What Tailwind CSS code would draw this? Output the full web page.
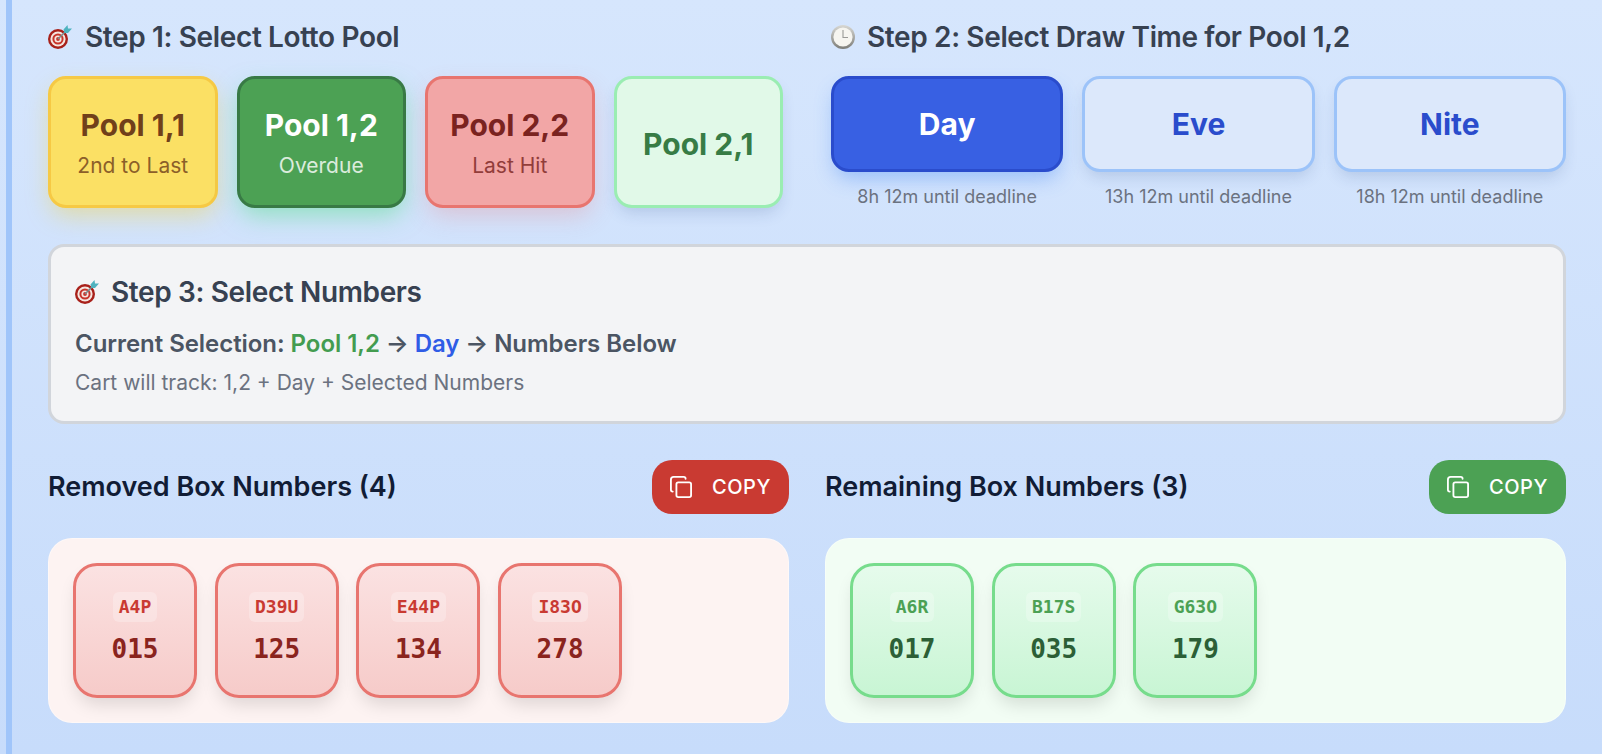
<!DOCTYPE html>
<html lang="en">
<head>
  <meta charset="UTF-8">
  <meta name="viewport" content="width=device-width, initial-scale=1.0">
  <title>Lotto Pool Selector</title>
  <script src="https://cdn.jsdelivr.net/npm/@tailwindcss/browser@4"></script>
</head>
<body class="h-[754px] overflow-hidden bg-gradient-to-b from-[#d6e6fd] to-[#c7dcfb] font-['Inter',sans-serif]">
  <main class="ml-[6px] h-full border-l-[6px] border-[#a0c5fa] pl-[36px] pr-[36px]">

    <!-- step 1 + step 2 -->
    <section class="grid grid-cols-2 gap-x-[48px] pt-[21px]">
      <div>
        <h2 class="flex h-[32px] items-center gap-[13px] text-[28px] font-semibold tracking-[-0.37px] text-[#374151]">
          <svg class="h-[24px] w-[24px]" viewBox="0 0 24 24">
            <circle cx="10" cy="14" r="10" fill="#a8201a"/>
            <circle cx="10" cy="14" r="7.6" fill="#f5e6e0"/>
            <circle cx="10" cy="14" r="5.6" fill="#c8352b"/>
            <circle cx="10" cy="14" r="3.6" fill="#f5e6e0"/>
            <circle cx="10" cy="14" r="1.9" fill="#c8352b"/>
            <path d="M10 14 18 6" stroke="#7a8a8c" stroke-width="1.6"/>
            <path d="M15.5 4.5 19.5 0 20 3.5 24 3.5 20 8 16.5 8Z" fill="#4fb3bf"/>
          </svg>
          Step 1: Select Lotto Pool
        </h2>
        <div class="mt-[23px] grid grid-cols-4 gap-[19px]">
          <button class="flex h-[132px] flex-col items-center justify-center rounded-[18px] border-[3px] border-[#f6c944] bg-[#fbe064] pt-[3px] text-[#70401a] shadow-[0_10px_25px_-3px_rgba(250,204,21,0.38)]">
            <span class="text-[30px] font-bold leading-[36px]">Pool 1,1</span>
            <span class="mt-[9px] text-[21px] leading-[28px] opacity-80">2nd to Last</span>
          </button>
          <button class="flex h-[132px] flex-col items-center justify-center rounded-[18px] border-[3px] border-[#387a45] bg-[#4ca154] pt-[3px] text-white shadow-[0_10px_25px_-3px_rgba(74,222,128,0.5)]">
            <span class="text-[30px] font-bold leading-[36px]">Pool 1,2</span>
            <span class="mt-[9px] text-[21px] leading-[28px] opacity-80">Overdue</span>
          </button>
          <button class="flex h-[132px] flex-col items-center justify-center rounded-[18px] border-[3px] border-[#e8756f] bg-[#f2a6a6] pt-[3px] text-[#7a2320] shadow-[0_10px_25px_-3px_rgba(239,120,120,0.3)]">
            <span class="text-[30px] font-bold leading-[36px]">Pool 2,2</span>
            <span class="mt-[9px] text-[21px] leading-[28px] opacity-80">Last Hit</span>
          </button>
          <button class="flex h-[132px] flex-col items-center justify-center rounded-[18px] border-[3px] border-[#9aedb2] bg-[#e1f9e8] pt-[3px] text-[#377c45] shadow-[0_8px_16px_-4px_rgba(30,60,120,0.18)]">
            <span class="text-[30px] font-bold leading-[36px]">Pool 2,1</span>
          </button>
        </div>
      </div>

      <div>
        <h2 class="flex h-[32px] items-center gap-[12px] text-[28px] font-semibold tracking-[-0.37px] text-[#374151]">
          <svg class="h-[24px] w-[24px]" viewBox="0 0 24 24">
            <defs>
              <linearGradient id="clockRim" x1="0" y1="0" x2="0" y2="1">
                <stop offset="0" stop-color="#d8d8d4"/>
                <stop offset="1" stop-color="#7d7d78"/>
              </linearGradient>
            </defs>
            <circle cx="12" cy="12" r="12" fill="url(#clockRim)"/>
            <circle cx="12" cy="12" r="9.6" fill="#f6f5f0"/>
            <path d="M12 5v7.5h5" fill="none" stroke="#9a9a97" stroke-width="1.1"/>
          </svg>
          Step 2: Select Draw Time for Pool 1,2
        </h2>
        <div class="mt-[23px] grid grid-cols-3 gap-[19px]">
          <div class="flex flex-col items-center">
            <button class="h-[96px] w-full rounded-[18px] border-[3px] border-[#2a4ccc] bg-[#3860e3] text-[30px] font-bold text-white shadow-[0_10px_20px_-4px_rgba(59,130,246,0.4)]">Day</button>
            <span class="mt-[14px] text-[18px] leading-[22px] text-[#6b7280]">8h 12m until deadline</span>
          </div>
          <div class="flex flex-col items-center">
            <button class="h-[96px] w-full rounded-[18px] border-[3px] border-[#9cc3f9] bg-[#dce8fb] text-[30px] font-bold text-[#2a4ccc] shadow-[0_8px_16px_-4px_rgba(30,60,120,0.18)]">Eve</button>
            <span class="mt-[14px] text-[18px] leading-[22px] text-[#6b7280]">13h 12m until deadline</span>
          </div>
          <div class="flex flex-col items-center">
            <button class="h-[96px] w-full rounded-[18px] border-[3px] border-[#9cc3f9] bg-[#dce8fb] text-[30px] font-bold text-[#2a4ccc] shadow-[0_8px_16px_-4px_rgba(30,60,120,0.18)]">Nite</button>
            <span class="mt-[14px] text-[18px] leading-[22px] text-[#6b7280]">18h 12m until deadline</span>
          </div>
        </div>
      </div>
    </section>

    <!-- step 3 -->
    <section class="mt-[36px] h-[180px] rounded-[16px] border-[3px] border-[#d1d5db] bg-[#f3f4f6] pl-[24px] pt-[29px]">
      <h2 class="flex h-[32px] items-center gap-[12px] text-[28px] font-semibold tracking-[-0.37px] text-[#374151]">
        <svg class="h-[24px] w-[24px]" viewBox="0 0 24 24">
          <circle cx="10" cy="14" r="10" fill="#a8201a"/>
          <circle cx="10" cy="14" r="7.6" fill="#f5e6e0"/>
          <circle cx="10" cy="14" r="5.6" fill="#c8352b"/>
          <circle cx="10" cy="14" r="3.6" fill="#f5e6e0"/>
          <circle cx="10" cy="14" r="1.9" fill="#c8352b"/>
          <path d="M10 14 18 6" stroke="#7a8a8c" stroke-width="1.6"/>
          <path d="M15.5 4.5 19.5 0 20 3.5 24 3.5 20 8 16.5 8Z" fill="#4fb3bf"/>
        </svg>
        Step 3: Select Numbers
      </h2>
      <p class="mt-[20px] text-[24px] font-semibold leading-[32px] tracking-[-0.05px] text-[#4b5563]">Current Selection: <span class="text-[#439c50]">Pool 1,2</span> → <span class="text-[#2f5ce6]">Day</span> → Numbers Below</p>
      <p class="mt-[9px] text-[21px] leading-[28px] text-[#6b7280]">Cart will track: 1,2 + Day + Selected Numbers</p>
    </section>

    <!-- number lists -->
    <section class="mt-[36px] grid grid-cols-2 gap-x-[36px]">
      <div>
        <div class="flex h-[54px] items-center justify-between">
          <h3 class="pt-[1px] text-[27px] font-semibold text-[#111c35]">Removed Box Numbers (4)</h3>
          <button class="flex h-[54px] w-[137px] items-center justify-center gap-[20px] rounded-[20px] bg-[#c93a32] text-[20px] font-medium tracking-[0.5px] text-white">
            <svg class="h-[22px] w-[22px]" viewBox="0 0 24 24" fill="none" stroke="currentColor" stroke-width="2" stroke-linecap="round" stroke-linejoin="round"><rect x="7" y="7" width="16" height="16" rx="2"/><path d="M3 17c-1 0-2-1-2-2V4c0-2 1-3 3-3h11c1 0 2 1 2 2"/></svg>
            COPY
          </button>
        </div>
        <div class="mt-[24px] flex h-[185px] gap-[17.7px] rounded-[24px] border border-white/40 bg-[#fdf3f2] p-[24px]">
          <div class="flex h-[135px] w-[124px] flex-col items-center rounded-[24px] border-[3px] border-[#e8756f] bg-gradient-to-b from-[#fbe2e2] to-[#f6cbc9] pt-[26px] font-['DejaVu_Sans_Mono',monospace] font-bold shadow-[0_10px_18px_-4px_rgba(0,0,0,0.13)]">
            <span class="rounded-[6px] bg-white/25 px-[6px] text-[18px] leading-[30px] text-[#c93a32]">A4P</span>
            <span class="mt-[11px] text-[26px] leading-[32px] text-[#8a241e]">015</span>
          </div>
          <div class="flex h-[135px] w-[124px] flex-col items-center rounded-[24px] border-[3px] border-[#e8756f] bg-gradient-to-b from-[#fbe2e2] to-[#f6cbc9] pt-[26px] font-['DejaVu_Sans_Mono',monospace] font-bold shadow-[0_10px_18px_-4px_rgba(0,0,0,0.13)]">
            <span class="rounded-[6px] bg-white/25 px-[6px] text-[18px] leading-[30px] text-[#c93a32]">D39U</span>
            <span class="mt-[11px] text-[26px] leading-[32px] text-[#8a241e]">125</span>
          </div>
          <div class="flex h-[135px] w-[124px] flex-col items-center rounded-[24px] border-[3px] border-[#e8756f] bg-gradient-to-b from-[#fbe2e2] to-[#f6cbc9] pt-[26px] font-['DejaVu_Sans_Mono',monospace] font-bold shadow-[0_10px_18px_-4px_rgba(0,0,0,0.13)]">
            <span class="rounded-[6px] bg-white/25 px-[6px] text-[18px] leading-[30px] text-[#c93a32]">E44P</span>
            <span class="mt-[11px] text-[26px] leading-[32px] text-[#8a241e]">134</span>
          </div>
          <div class="flex h-[135px] w-[124px] flex-col items-center rounded-[24px] border-[3px] border-[#e8756f] bg-gradient-to-b from-[#fbe2e2] to-[#f6cbc9] pt-[26px] font-['DejaVu_Sans_Mono',monospace] font-bold shadow-[0_10px_18px_-4px_rgba(0,0,0,0.13)]">
            <span class="rounded-[6px] bg-white/25 px-[6px] text-[18px] leading-[30px] text-[#c93a32]">I83O</span>
            <span class="mt-[11px] text-[26px] leading-[32px] text-[#8a241e]">278</span>
          </div>
        </div>
      </div>

      <div>
        <div class="flex h-[54px] items-center justify-between">
          <h3 class="pt-[1px] text-[27px] font-semibold text-[#111c35]">Remaining Box Numbers (3)</h3>
          <button class="flex h-[54px] w-[137px] items-center justify-center gap-[20px] rounded-[20px] bg-[#4ca154] text-[20px] font-medium tracking-[0.5px] text-white">
            <svg class="h-[22px] w-[22px]" viewBox="0 0 24 24" fill="none" stroke="currentColor" stroke-width="2" stroke-linecap="round" stroke-linejoin="round"><rect x="7" y="7" width="16" height="16" rx="2"/><path d="M3 17c-1 0-2-1-2-2V4c0-2 1-3 3-3h11c1 0 2 1 2 2"/></svg>
            COPY
          </button>
        </div>
        <div class="mt-[24px] flex h-[185px] gap-[17.7px] rounded-[24px] border border-white/40 bg-[#f2fdf4] p-[24px]">
          <div class="flex h-[135px] w-[124px] flex-col items-center rounded-[24px] border-[3px] border-[#77dc8c] bg-gradient-to-b from-[#e6fbec] to-[#c8f5d4] pt-[26px] font-['DejaVu_Sans_Mono',monospace] font-bold shadow-[0_10px_18px_-4px_rgba(0,0,0,0.13)]">
            <span class="rounded-[6px] bg-white/25 px-[6px] text-[18px] leading-[30px] text-[#4ca154]">A6R</span>
            <span class="mt-[11px] text-[26px] leading-[32px] text-[#2c5f36]">017</span>
          </div>
          <div class="flex h-[135px] w-[124px] flex-col items-center rounded-[24px] border-[3px] border-[#77dc8c] bg-gradient-to-b from-[#e6fbec] to-[#c8f5d4] pt-[26px] font-['DejaVu_Sans_Mono',monospace] font-bold shadow-[0_10px_18px_-4px_rgba(0,0,0,0.13)]">
            <span class="rounded-[6px] bg-white/25 px-[6px] text-[18px] leading-[30px] text-[#4ca154]">B17S</span>
            <span class="mt-[11px] text-[26px] leading-[32px] text-[#2c5f36]">035</span>
          </div>
          <div class="flex h-[135px] w-[124px] flex-col items-center rounded-[24px] border-[3px] border-[#77dc8c] bg-gradient-to-b from-[#e6fbec] to-[#c8f5d4] pt-[26px] font-['DejaVu_Sans_Mono',monospace] font-bold shadow-[0_10px_18px_-4px_rgba(0,0,0,0.13)]">
            <span class="rounded-[6px] bg-white/25 px-[6px] text-[18px] leading-[30px] text-[#4ca154]">G63O</span>
            <span class="mt-[11px] text-[26px] leading-[32px] text-[#2c5f36]">179</span>
          </div>
        </div>
      </div>
    </section>
  </main>
</body>
</html>
